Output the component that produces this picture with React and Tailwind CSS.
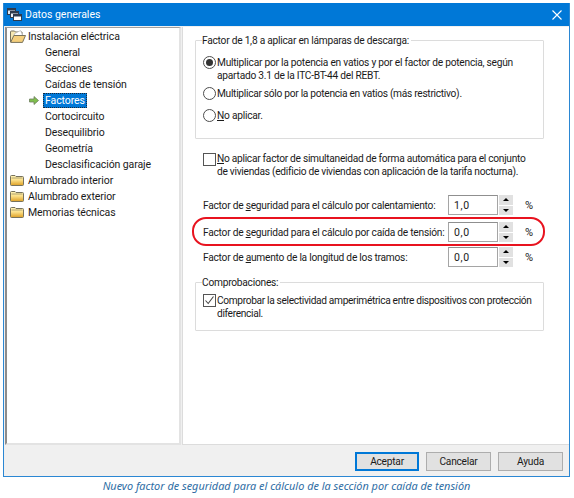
import React from 'react';

const FolderClosed = () => (
  <span className="flex w-[15px] shrink-0">
    <svg width="14" height="11" viewBox="0 0 14 11">
      <defs>
        <linearGradient id="fc" x1="0" y1="0" x2="0" y2="1">
          <stop offset="0" stopColor="#fff3b8" />
          <stop offset="0.45" stopColor="#fbe08a" />
          <stop offset="1" stopColor="#dd9f24" />
        </linearGradient>
      </defs>
      <path d="M0.5 1.5 Q0.5 0.5 1.5 0.5 H5 L6 1.5 H12.5 Q13.5 1.5 13.5 2.5 V9.5 Q13.5 10.5 12.5 10.5 H1.5 Q0.5 10.5 0.5 9.5 Z" fill="url(#fc)" stroke="#77725c" strokeWidth="1" />
      <path d="M1.5 3 H12.5" stroke="#8f8660" strokeWidth="0.7" />
    </svg>
  </span>
);

const FolderOpen = () => (
  <svg width="16" height="13" viewBox="0 0 16 13" className="shrink-0">
    <path d="M0.5 12 V2 Q0.5 1 1.5 1 H4.5 L5.5 2 H12 V5" fill="#f6e7b0" stroke="#77725c" strokeWidth="1" />
    <path d="M4 4 L10.5 0.5 L12.5 5 L6 7 Z" fill="#ffffff" stroke="#b3b3b3" strokeWidth="0.7" />
    <path d="M0.7 12.4 L3.8 5.5 H15.5 L12.5 12.4 Z" fill="#f5cf7c" stroke="#77725c" strokeWidth="1" strokeLinejoin="round" />
  </svg>
);

const TitleIcon = () => (
  <svg width="15" height="13" viewBox="0 0 15 13" className="shrink-0">
    <rect x="0.5" y="0.5" width="8" height="6" fill="#dfe7f2" stroke="#2e3b4c" />
    <rect x="0.5" y="0.5" width="8" height="2" fill="#2e3b4c" />
    <rect x="3.5" y="3.5" width="8" height="6" fill="#eef2f8" stroke="#2e3b4c" />
    <rect x="3.5" y="3.5" width="8" height="2" fill="#2e3b4c" />
    <rect x="6.5" y="6.5" width="8" height="6" fill="#ffffff" stroke="#2e3b4c" />
    <rect x="6.5" y="6.5" width="8" height="2" fill="#2e3b4c" />
  </svg>
);

const GreenArrow = () => (
  <svg width="10" height="9" viewBox="0 0 10 9">
    <path d="M0.5 3 H5 V0.5 L9.5 4.5 L5 8.5 V6 H0.5 Z" fill="#7fbf4d" stroke="#6f7f5f" strokeWidth="0.8" />
  </svg>
);

const Radio = ({ checked }) => (
  <span className="flex h-[13px] w-[13px] shrink-0 items-center justify-center rounded-full border border-[#4d4d4d] bg-white">
    {checked && <span className="h-[7px] w-[7px] rounded-full bg-[#333333]" />}
  </span>
);

const Checkbox = ({ checked }) => (
  <span className="flex h-[13px] w-[13px] shrink-0 items-center justify-center border border-[#555555] bg-white">
    {checked && (
      <svg width="11" height="11" viewBox="0 0 11 11">
        <path d="M1.5 5.5 L4.2 8.5 L9.5 1.5" fill="none" stroke="#444444" strokeWidth="1.1" />
      </svg>
    )}
  </span>
);

const TreeRoot = ({ label, open }) => (
  <div className="flex h-4 items-center pl-[3px]">
    {open ? <FolderOpen /> : <FolderClosed />}
    <span className={open ? 'ml-[2px]' : 'ml-[3px]'}>{label}</span>
  </div>
);

const TreeChild = ({ label, selected }) => (
  <div className="flex h-4 items-center">
    <span className="flex w-[37px] justify-end pr-[5px]">{selected && <GreenArrow />}</span>
    {selected ? (
      <span className="-ml-[1px] border border-dotted border-[#1b2a3a] bg-[#0078d7] px-[1px] leading-[13px] text-white">{label}</span>
    ) : (
      <span className="ml-[1px]">{label}</span>
    )}
  </div>
);

const Spinner = ({ value }) => (
  <div className="flex h-[20px] w-[65px]">
    <div className="flex h-full w-[50px] items-center border border-[#a5a5a5] border-t-[#8f8f8f] bg-white pl-[5px] text-[10.5px] tracking-[0.6px]">{value}</div>
    <div className="ml-[1px] flex w-[14px] flex-col gap-[1px]">
      <div className="flex flex-1 items-center justify-center bg-[#e1e1e1]">
        <span className="h-0 w-0 border-x-[3px] border-b-[3px] border-x-transparent border-b-black" />
      </div>
      <div className="flex flex-1 items-center justify-center bg-[#e1e1e1]">
        <span className="h-0 w-0 border-x-[3px] border-t-[3px] border-x-transparent border-t-black" />
      </div>
    </div>
  </div>
);

const FactorRow = ({ children, value, className }) => (
  <div className={`flex h-[20px] items-center pl-[8px] ${className || ''}`}>
    <span className="w-[245px] whitespace-nowrap">{children}</span>
    <Spinner value={value} />
    <span className="ml-[12px] text-[11px]">%</span>
  </div>
);

const Button = ({ children, primary }) => (
  <button
    className={
      primary
        ? 'h-[19px] w-[64px] border-2 border-[#0078d7] bg-[#e1e1e1]'
        : 'h-[19px] w-[65px] border border-[#adadad] bg-[#e1e1e1]'
    }
  >
    {children}
  </button>
);

export default function App() {
  return (
    <div className="h-[498px] w-[574px] overflow-hidden bg-white pl-[3px] pt-[3px] font-['Roboto','Noto_Sans',sans-serif] text-[10.2px] leading-[13px] tracking-[-0.24px] text-[#1a1a1a]">
      <div className="flex h-[474px] w-[567px] flex-col border border-t-0 border-[#2b87d3] bg-[#f0f0f0]">
        {/* title bar */}
        <div className="flex h-[23px] shrink-0 items-center bg-[#0078d7] pl-[3px] pr-[7px] text-white">
          <TitleIcon />
          <span className="ml-[3px] text-[10.5px] tracking-normal">Datos generales</span>
          <svg width="10" height="10" viewBox="0 0 10 10" className="ml-auto">
            <path d="M0.5 0.5 L9.5 9.5 M9.5 0.5 L0.5 9.5" stroke="#ffffff" strokeWidth="1.1" />
          </svg>
        </div>

        <div className="flex h-[419px] shrink-0 gap-[1px] pl-[1px] pt-[1px]">
          {/* tree */}
          <div className="w-[176px] border-2 border-t border-b-[#e3e3e3] border-l-[#8c8c8c] border-r-[#e3e3e3] border-t-[#a0a0a0] bg-white text-[10.5px] tracking-[-0.1px]">
            <TreeRoot label="Instalación eléctrica" open />
            <TreeChild label="General" />
            <TreeChild label="Secciones" />
            <TreeChild label="Caídas de tensión" />
            <TreeChild label="Factores" selected />
            <TreeChild label="Cortocircuito" />
            <TreeChild label="Desequilibrio" />
            <TreeChild label="Geometría" />
            <TreeChild label="Desclasificación garaje" />
            <TreeRoot label="Alumbrado interior" />
            <TreeRoot label="Alumbrado exterior" />
            <TreeRoot label="Memorias técnicas" />
          </div>

          {/* options panel */}
          <div className="relative flex-1 border border-t-0 border-r-0 border-[#dcdcdc] bg-white pl-[12px] pt-[7px]">
            <fieldset className="h-[105px] w-[349px] min-w-0 rounded-[1px] border border-[#dcdcdc] px-[7px]">
              <legend className="-ml-[1px] bg-white pr-[2px]">Factor de 1,8 a aplicar en lámparas de descarga:</legend>
              <div className="mt-[9px] flex gap-[1px]">
                <Radio checked />
                <span className="whitespace-nowrap">
                  Multiplicar por la potencia en vatios y por el factor de potencia, según<br />apartado 3.1 de la ITC-BT-44 del REBT.
                </span>
              </div>
              <div className="mt-[5px] flex items-center gap-[1px]">
                <Radio />
                <span className="tracking-[-0.29px]">Multiplicar sólo por la potencia en vatios (más restrictivo).</span>
              </div>
              <div className="mt-[9px] flex items-center gap-[1px]">
                <Radio />
                <span><u>N</u>o aplicar.</span>
              </div>
            </fieldset>

            <div className="ml-[8px] mt-[13px] flex gap-[1px]">
              <span className="pt-[1px]"><Checkbox /></span>
              <span className="whitespace-nowrap tracking-[-0.28px]">
                <u>N</u>o aplicar factor de simultaneidad de forma automática para el conjunto<br />de viviendas (edificio de viviendas con aplicación de la tarifa nocturna).
              </span>
            </div>

            <div className="mt-[17px] flex flex-col">
              <FactorRow value="1,0">Factor de <u>s</u>eguridad para el cálculo por calentamiento:</FactorRow>
              <FactorRow value="0,0" className="mt-[7px]">Factor de <u>s</u>eguridad para el cálculo por caída de tensión:</FactorRow>
              <FactorRow value="0,0" className="mt-[5px]">Factor de <u>a</u>umento de la longitud de los tramos:</FactorRow>
            </div>

            <fieldset className="mt-[9px] h-[55px] w-[349px] min-w-0 rounded-[1px] border border-[#dcdcdc] px-[7px]">
              <legend className="-ml-[1px] bg-white pr-[2px]">Comprobaciones:</legend>
              <div className="mt-[5px] flex gap-[1px]">
                <Checkbox checked />
                <span className="whitespace-nowrap tracking-[-0.34px]">
                  Comprobar la selectividad amperimétrica entre dispositivos con protección<br />diferencial.
                </span>
              </div>
            </fieldset>

            {/* red highlight over the second row */}
            <div className="absolute left-[9px] top-[190px] h-[29px] w-[353px] rounded-[14px] border-2 border-[#e8131f]" />
          </div>
        </div>

        {/* buttons */}
        <div className="flex flex-1 items-start justify-end gap-[7px] pr-[6px] pt-[7px]">
          <Button primary>Aceptar</Button>
          <Button>Cancelar</Button>
          <Button>Ayuda</Button>
        </div>
      </div>
      <p className="mt-[2px] w-[567px] text-center font-['Noto_Sans',sans-serif] text-[10.9px] italic tracking-normal text-[#2e6da4]">
        Nuevo factor de seguridad para el cálculo de la sección por caída de tensión
      </p>
    </div>
  );
}
